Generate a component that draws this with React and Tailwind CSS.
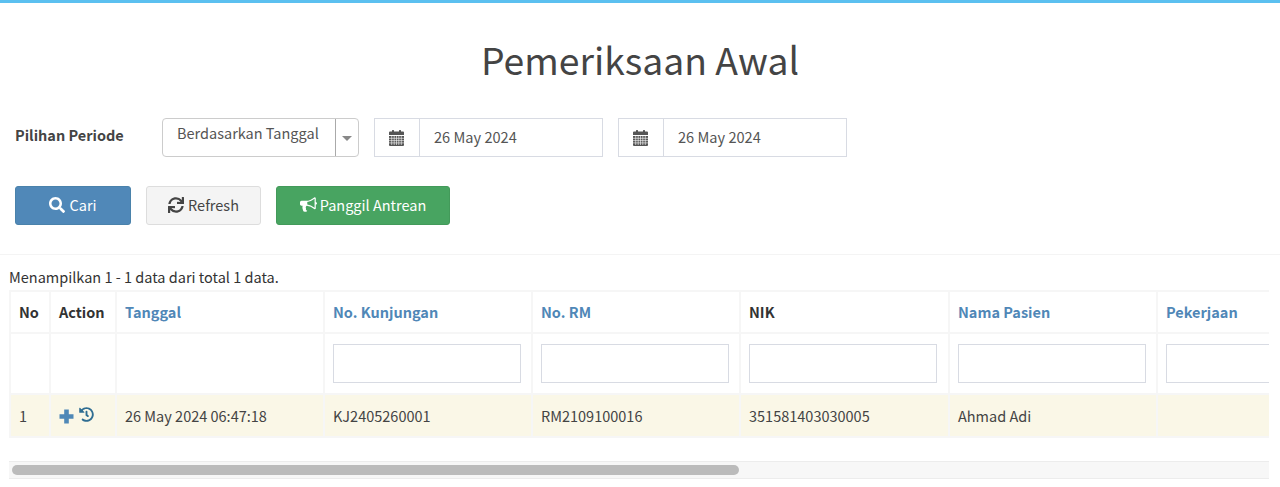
import React from "react";
import { FaSearch, FaSync, FaHistory } from "react-icons/fa";

const font = "font-['Noto_Sans_CJK_JP','Noto_Sans',sans-serif]";

function Cal() {
  return (
    <svg width="15" height="16" viewBox="0 0 15 16" fill="#555" className="block">
      <rect x="3" y="0" width="2" height="3" rx="0.5" />
      <rect x="10" y="0" width="2" height="3" rx="0.5" />
      <path d="M1 1.5h13a1 1 0 0 1 1 1V5H0V2.5a1 1 0 0 1 1-1z" />
      <path d="M0 6h15v9a1 1 0 0 1-1 1H1a1 1 0 0 1-1-1z" />
      <g stroke="#fff" strokeWidth="0.6">
        <path d="M0 8.3h15M0 10.6h15M0 12.9h15M2.7 6v9M5.2 6v9M7.5 6v9M9.8 6v9M12.3 6v9" />
      </g>
    </svg>
  );
}

function Bullhorn() {
  return (
    <svg width="17" height="17" viewBox="0 0 1792 1792" fill="currentColor" className="block">
      <path d="M1664 640q53 0 90.5 37.5t37.5 90.500-37.500 90.500-90.500 37.500v384q0 52-38 90t-90 38q-417-347-812-380-58 19-91 66t-31 100.500 40 92.500q-20 33-23 65.500t6 58 33.500 55 48 50 61.500 50.500q-29 58-111.500 83t-168.500 11.500-132-55.500q-7-23-29.500-87.500t-32-94.500-23-89-15-101 3.500-98.500 22-110.500h-122q-66 0-113-47t-47-113v-192q0-66 47-113t113-47h480q435 0 896-384 52 0 90 38t38 90v384zm-128 604v-954q-394 302-768 343v270q377 42 768 341z" />
    </svg>
  );
}

function Plus() {
  return (
    <svg width="15" height="15" viewBox="0 0 15 15" fill="#4f88b7" className="block">
      <path d="M5.2 0.5h4.600v4.700h4.700v4.600H9.800v4.700H5.200V9.800H0.500V5.200h4.700z" />
    </svg>
  );
}

function DateBox() {
  return (
    <div className="flex h-[39px] w-[229px] border border-[#d8dbe3] bg-white">
      <div className="flex w-[45px] items-center justify-center border-r border-[#d8dbe3] pr-[1px]">
        <Cal />
      </div>
      <div className="flex flex-1 items-center pb-[2px] pl-[14px] text-[14.6px] text-[#555]">26 May 2024</div>
    </div>
  );
}

const th = "border-2 border-[#f6f6f6] px-2 text-left align-middle font-bold";
const link = "text-[#5087b7]";
const filter = "border-2 border-[#f6f6f6] px-2 align-middle";
const td = "border-2 border-[#f6f6f6] px-2 pt-[1px] align-middle text-[#444]";

function FilterInput() {
  return <input className="block h-[39px] w-[188px] border border-[#d8dbe3] bg-white" />;
}

export default function App() {
  return (
    <div className={`${font} h-[487px] w-[1280px] overflow-hidden border-t-[3px] border-[#5bc0f0] bg-white text-[14.5px] text-[#333]`}>
      <div className="flex h-[252px] flex-col border-b border-[#f4f4f4]">
        <h1 className="mt-[32px] text-center text-[37.3px] leading-[48px] font-normal text-[#444]">Pemeriksaan Awal</h1>
        <div className="mt-[35px] flex items-center px-[15px]">
          <label className="w-[147px] pb-[5px] font-bold text-[#444]">Pilihan Periode</label>
          <div className="flex h-[39px] w-[197px] rounded-[4px] border border-[#ccc] bg-white">
            <div className="flex-1 pl-[14px] pt-[2px] leading-[24px] text-[#555]">Berdasarkan Tanggal</div>
            <div className="flex w-[23px] items-center justify-center border-l border-[#aaa]">
              <div className="mt-[2px] h-0 w-0 border-x-[5px] border-t-[5px] border-x-transparent border-t-[#888]" />
            </div>
          </div>
          <div className="ml-[15px] mr-[15px]"><DateBox /></div>
          <DateBox />
        </div>
        <div className="mt-[29px] flex gap-[15px] px-[15px]">
          <button className="flex h-[39px] w-[116px] items-center justify-center gap-[4px] rounded-[3px] border border-[#4a82ab] bg-[#5088b8] pb-[2px] text-[#fff]">
            <FaSearch size={16} /> Cari
          </button>
          <button className="flex h-[39px] w-[115px] items-center justify-center gap-[4px] rounded-[3px] border border-[#ddd] bg-[#f4f4f4] pb-[2px] text-[#444]">
            <FaSync size={16} /> Refresh
          </button>
          <button className="flex h-[39px] w-[174px] items-center justify-center gap-[3px] rounded-[3px] border border-[#439a5a] bg-[#48a461] pb-[2px] text-[#fff]">
            <Bullhorn /> Panggil Antrean
          </button>
        </div>
      </div>
      <div className="ml-[9px] mt-[11px] w-[1260px]">
        <div className="pb-[2px] leading-[22px] text-[#333]">Menampilkan 1 - 1 data dari total 1 data.</div>
        <div className="overflow-hidden">
          <table className="w-[1300px] table-fixed border-collapse">
            <colgroup>
              <col className="w-[40px]" />
              <col className="w-[66px]" />
              <col className="w-[208px]" />
              <col className="w-[208px]" />
              <col className="w-[208px]" />
              <col className="w-[209px]" />
              <col className="w-[208px]" />
              <col className="w-[208px]" />
            </colgroup>
            <thead>
              <tr className="h-[42px]">
                <th className={th}>No</th>
                <th className={th}>Action</th>
                <th className={`${th} ${link}`}>Tanggal</th>
                <th className={`${th} ${link}`}>No. Kunjungan</th>
                <th className={`${th} ${link}`}>No. RM</th>
                <th className={th}>NIK</th>
                <th className={`${th} ${link}`}>Nama Pasien</th>
                <th className={`${th} ${link}`}>Pekerjaan</th>
              </tr>
              <tr className="h-[61px]">
                <td className={filter}></td>
                <td className={filter}></td>
                <td className={filter}></td>
                <td className={filter}><FilterInput /></td>
                <td className={filter}><FilterInput /></td>
                <td className={filter}><FilterInput /></td>
                <td className={filter}><FilterInput /></td>
                <td className={filter}><FilterInput /></td>
              </tr>
            </thead>
            <tbody>
              <tr className="h-[43px] bg-[#faf7e7]">
                <td className={td}>1</td>
                <td className={td}>
                  <div className="flex items-center gap-[5px]">
                    <Plus />
                    <FaHistory size={15} className="-mt-[4px] text-[#2f6d92]" />
                  </div>
                </td>
                <td className={td}>26 May 2024 06:47:18</td>
                <td className={td}>KJ2405260001</td>
                <td className={td}>RM2109100016</td>
                <td className={td}>351581403030005</td>
                <td className={td}>Ahmad Adi</td>
                <td className={td}></td>
              </tr>
            </tbody>
          </table>
        </div>
        <div className="mt-[23px] h-[18px] border-y border-[#ececec] bg-[#f7f7f7] py-[3px]">
          <div className="ml-[3px] h-[10px] w-[727px] rounded-full bg-[#bbb]" />
        </div>
      </div>
    </div>
  );
}
